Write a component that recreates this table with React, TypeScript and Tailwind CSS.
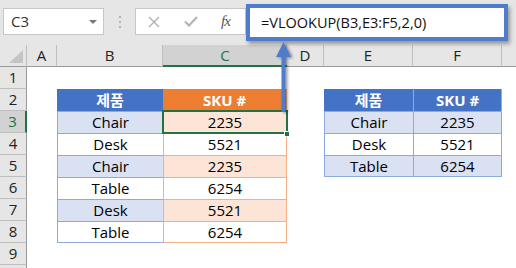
import React from "react";

const FONT = "font-['Open_Sans','Noto_Sans_CJK_KR',sans-serif]";

const colLetters = ["A", "B", "C", "D", "E", "F", ""];

const leftRows: [string, string][] = [
  ["Chair", "2235"],
  ["Desk", "5521"],
  ["Chair", "2235"],
  ["Table", "6254"],
  ["Desk", "5521"],
  ["Table", "6254"],
];

const rightRows: [string, string][] = [
  ["Chair", "2235"],
  ["Desk", "5521"],
  ["Table", "6254"],
];

function ColHeader({ label, active, last }: { label: string; active?: boolean; last?: boolean }) {
  return (
    <div
      className={
        active
          ? "flex items-center justify-center bg-[#d2d2d2] border-b-2 border-b-[#217346] text-[15px] text-[#217346]"
          : last
          ? "flex items-center justify-center bg-[#e6e6e6] border-b border-b-[#9b9b9b] text-[15px] text-[#222]"
          : "flex items-center justify-center bg-[#e6e6e6] border-r border-r-[#bfbfbf] border-b border-b-[#9b9b9b] text-[15px] text-[#222]"
      }
    >
      {label}
    </div>
  );
}

function RowHeader({ n }: { n: number }) {
  if (n === 3) {
    return (
      <div className="flex items-center justify-center bg-[#d2d2d2] border-r-2 border-r-[#217346] border-b border-b-[#bfbfbf] text-[15px] text-[#217346]">
        {n}
      </div>
    );
  }
  // row 10 only peeks in at the bottom edge, its number is not visible
  return (
    <div className="flex items-center justify-center bg-[#e6e6e6] border-r border-r-[#9b9b9b] border-b border-b-[#bfbfbf] text-[15px] text-[#222]">
      {n < 10 ? n : null}
    </div>
  );
}

// a body cell at sheet row r, column index c (0 = A)
function Cell({ r, c }: { r: number; c: number }) {
  // left table B2:C8
  if (r >= 2 && r <= 8 && (c === 1 || c === 2)) {
    const last = r === 8;
    if (r === 2) {
      return c === 1 ? (
        <div className="flex items-center justify-center bg-[#4472c4] text-white font-bold text-[15px]">제품</div>
      ) : (
        <div className="flex items-center justify-center bg-[#ed7d31] border-r border-r-[#f4b084] text-white font-bold text-[15px]">
          SKU #
        </div>
      );
    }
    const [name, sku] = leftRows[r - 3];
    const odd = r % 2 === 1;
    if (c === 1) {
      return (
        <div
          className={
            (odd ? "bg-[#d9e1f2] " : "bg-white ") +
            (last
              ? "flex items-center justify-center border-l border-t border-b border-[#8ea9db] text-[15px] text-black"
              : "flex items-center justify-center border-l border-t border-[#8ea9db] text-[15px] text-black")
          }
        >
          {name}
        </div>
      );
    }
    return (
      <div
        className={
          (odd ? "bg-[#fce4d6] " : "bg-white ") +
          (last
            ? "relative flex items-center justify-center border-l border-t border-r border-b border-[#f4b084] text-[15px] text-black"
            : "relative flex items-center justify-center border-l border-t border-r border-[#f4b084] text-[15px] text-black")
        }
      >
        {sku}
        {r === 3 && (
          <>
            <div className="absolute left-[-2px] top-[-2px] w-[126px] h-[24px] border-2 border-[#217346] z-10" />
            <div className="absolute right-[-4px] bottom-[-4px] w-[6px] h-[6px] bg-[#217346] border border-white z-20" />
          </>
        )}
      </div>
    );
  }

  // right table E2:F5
  if (r >= 2 && r <= 5 && (c === 4 || c === 5)) {
    if (r === 2) {
      return c === 4 ? (
        <div className="flex items-center justify-center bg-[#4472c4] text-white font-bold text-[15px]">제품</div>
      ) : (
        <div className="flex items-center justify-center bg-[#4472c4] border-l border-l-[#8ea9db] border-r border-r-[#8ea9db] text-white font-bold text-[15px]">
          SKU #
        </div>
      );
    }
    const [name, sku] = rightRows[r - 3];
    const odd = r % 2 === 1;
    const last = r === 5;
    return (
      <div
        className={
          (odd ? "bg-[#d9e1f2] " : "bg-white ") +
          (c === 5
            ? last
              ? "flex items-center justify-center border-l border-t border-r border-b border-[#8ea9db] text-[15px] text-black"
              : "flex items-center justify-center border-l border-t border-r border-[#8ea9db] text-[15px] text-black"
            : last
            ? "flex items-center justify-center border-l border-t border-b border-[#8ea9db] text-[15px] text-black"
            : "flex items-center justify-center border-l border-t border-[#8ea9db] text-[15px] text-black")
        }
      >
        {c === 4 ? name : sku}
      </div>
    );
  }

  return <div className="bg-white" />;
}

function FormulaBar() {
  return (
    <div className="flex h-[45px] bg-[#e6e6e6] pl-[3px]">
      {/* name box */}
      <div className="mt-[8px] h-[27px] w-[101px] bg-white border border-[#c6c6c6] flex items-center justify-between pl-[7px] pr-[6px]">
        <span className="text-[15px] text-[#333]">C3</span>
        <span className="w-0 h-0 border-l-[4px] border-r-[4px] border-t-[4px] border-l-transparent border-r-transparent border-t-[#777]" />
      </div>

      {/* grip */}
      <div className="w-[31px] flex flex-col items-center justify-center gap-[3px] pb-[2px]">
        <span className="w-[2px] h-[2px] bg-[#b4b4b4]" />
        <span className="w-[2px] h-[2px] bg-[#b4b4b4]" />
        <span className="w-[2px] h-[2px] bg-[#b4b4b4]" />
      </div>

      {/* cancel / enter / fx */}
      <div className="mt-[8px] h-[27px] w-[111px] bg-white border border-[#c6c6c6] flex items-center">
        <svg width="12" height="12" viewBox="0 0 12 12" className="ml-[12px]">
          <path d="M1 1 L11 11 M11 1 L1 11" stroke="#b0b0b0" strokeWidth="1.4" fill="none" />
        </svg>
        <svg width="14" height="11" viewBox="0 0 14 11" className="ml-[24px]">
          <path d="M1 5.5 L5 9.5 L13 1" stroke="#b4b4b4" strokeWidth="2.2" fill="none" />
        </svg>
        <span className="ml-[23px] font-['Liberation_Serif',serif] italic text-[15px] text-[#555] tracking-[-1px]">fx</span>
      </div>

      {/* formula input, highlighted */}
      <div className="mt-[4px] h-[37px] w-[262px] bg-white border-4 border-[#4f7ccb] shadow-[2px_3px_4px_rgba(0,0,0,0.35)] flex items-center pl-[11px] z-10">
        <span className="text-[14.5px] text-[#111]">=VLOOKUP(B3,E3:F5,2,0)</span>
      </div>
    </div>
  );
}

export default function App() {
  const rows = [1, 2, 3, 4, 5, 6, 7, 8, 9, 10];
  return (
    <div className={`relative w-[516px] h-[268px] overflow-hidden bg-white ${FONT}`}>
      <FormulaBar />

      <div className="grid grid-cols-[27px_30px_106px_124px_37px_89px_89px_14px] auto-rows-[22px]">
        {/* select-all corner */}
        <div className="relative bg-[#e6e6e6] border-r border-r-[#bfbfbf] border-b border-b-[#9b9b9b]">
          <svg width="14" height="13" viewBox="0 0 14 13" className="absolute right-[3px] bottom-[3px]">
            <path d="M14 0 L14 13 L0 13 Z" fill="#c4c4c4" />
          </svg>
        </div>
        {colLetters.map((l, i) => (
          <ColHeader key={i} label={l} active={l === "C"} last={i === colLetters.length - 1} />
        ))}

        {rows.map((r) => (
          <React.Fragment key={r}>
            <RowHeader n={r} />
            {colLetters.map((_, c) => (
              <Cell key={c} r={r} c={c} />
            ))}
          </React.Fragment>
        ))}
      </div>

      {/* annotation arrow from C3 up to the formula */}
      <svg
        width="20"
        height="74"
        viewBox="0 0 20 74"
        className="absolute left-[274px] top-[40px] z-30 drop-shadow-[2px_1px_1.5px_rgba(0,0,0,0.4)]"
      >
        <polygon points="9.5,2 17,17 2,17" fill="#4f7ccb" />
        <rect x="7.5" y="15" width="4" height="57" fill="#4f7ccb" />
      </svg>
    </div>
  );
}
